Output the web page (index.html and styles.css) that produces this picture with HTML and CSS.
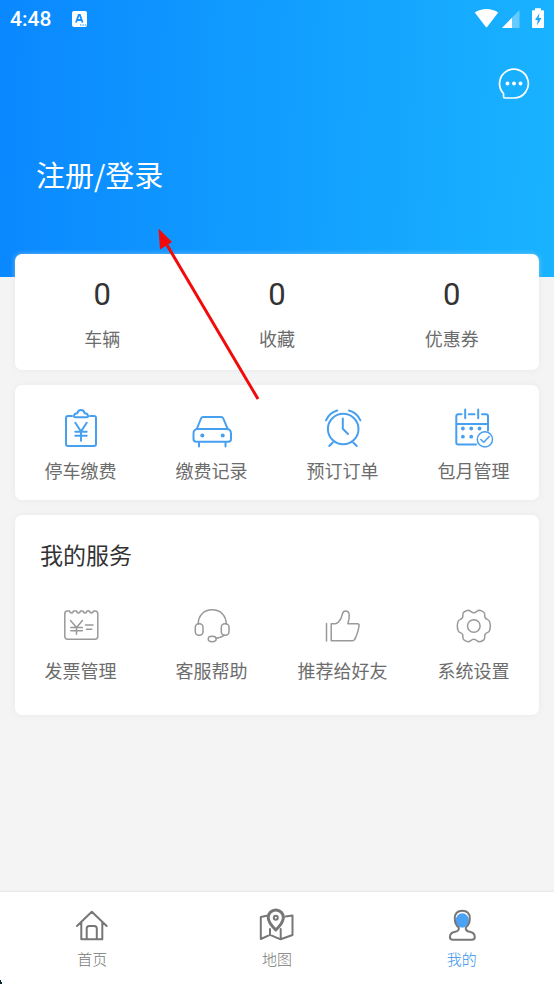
FILE: index.html
```html
<!DOCTYPE html>
<html lang="zh-CN">
<head>
<meta charset="utf-8">
<meta name="viewport" content="width=device-width, initial-scale=1">
<title>我的</title>
<link rel="stylesheet" href="styles.css">
</head>
<body>
<div class="page">
  <header class="hero">
    <div class="status">
      <span class="clock">4:48</span>
      <svg class="status-app" width="16" height="16" viewBox="0 0 16 16" aria-hidden="true">
        <rect width="15" height="16" rx="2" fill="#fff"/>
        <path d="M4 11.500 6.700 4h1.200l2.700 7.500M5 9h4.600" fill="none" stroke="#178fff" stroke-width="1.800"/>
        <path d="M8 14h1.400M10.500 14h1.400M13 14h1.200" stroke="#178fff" stroke-width="1.200"/>
      </svg>
      <svg class="status-signals" width="72" height="22" viewBox="0 0 72 22" aria-hidden="true">
        <path d="M.8 4.500C7-.2 18-.2 24.200 4.500L13.300 18.700q-.8 1-1.600 0z" fill="#fff"/>
        <path d="M45.500 2v18H28z" fill="#fff" opacity=".35"/>
        <path d="M38 9.700V20H28z" fill="#fff"/>
        <path d="M58 3.200q0-1 1-1h2V.2h6v2h2q1 0 1 1V19q0 1-1 1H59q-1 0-1-1z" fill="#fff"/>
        <path d="M65.500 5 61 12h2.700l-.7 5.500 4.500-7.500h-2.800z" fill="#18a9ff"/>
      </svg>
    </div>
    <button class="message" type="button" aria-label="消息">
      <svg width="32" height="32" viewBox="0 0 32 32" aria-hidden="true">
        <path d="M5.500 25.500A14.400 14.400 0 1 1 16 30H7Q5.500 30 5.500 28.600z" fill="none" stroke="#fff" stroke-width="1.700"/>
        <g fill="#fff"><circle cx="9.500" cy="15.500" r="1.900"/><circle cx="16" cy="15.500" r="1.900"/><circle cx="22.500" cy="15.500" r="1.900"/></g>
      </svg>
    </button>
    <a class="login" href="#login">注册/登录</a>
  </header>

  <main class="content">
    <section class="card stats">
      <a class="stat" href="#cars"><strong>0</strong><span>车辆</span></a>
      <a class="stat" href="#favorites"><strong>0</strong><span>收藏</span></a>
      <a class="stat" href="#coupons"><strong>0</strong><span>优惠券</span></a>
    </section>

    <section class="card shortcuts">
      <a class="item" href="#pay">
        <svg class="icon blue" viewBox="0 0 40 40" aria-hidden="true">
          <path d="M11 8H7Q5 8 5 10V36Q5 38 7 38H33Q35 38 35 36V10Q35 8 33 8H29"/>
          <path d="M14.500 9.300Q12.500 9.300 13 7.500 13.500 5.500 16.300 5.300 17 2 20 2T23.700 5.300Q26.500 5.500 27 7.500 27.500 9.300 25.500 9.300z"/>
          <path d="M14.300 14.700 20 23.500 25.700 14.700M20 23.500V32.700M14.300 23.700H25.700M14.300 27.700H25.700"/>
        </svg>
        <span>停车缴费</span>
      </a>
      <a class="item" href="#records">
        <svg class="icon blue" viewBox="0 0 40 40" aria-hidden="true">
          <path d="M5 20.500 9 10.500Q9.600 9 11.300 9H29Q30.700 9 31.300 10.500L35.500 20.500"/>
          <path d="M5.500 21H35Q39 21.500 39 25.500V31Q39 33.800 36.200 33.800H4.300Q1.500 33.800 1.500 31V25.500Q1.500 21.500 5.500 21zM7 34V38.500M33.500 34V38.500"/>
          <g class="solid"><circle cx="10.300" cy="27.400" r="2"/><circle cx="30.700" cy="27.400" r="2"/></g>
        </svg>
        <span>缴费记录</span>
      </a>
      <a class="item" href="#bookings">
        <svg class="icon blue" viewBox="0 0 40 40" aria-hidden="true">
          <circle cx="20.200" cy="21" r="15.300"/>
          <path d="M19.800 10.500V20.700L25 26M3 12.300Q6.500 4.500 14.300 2.500M26 2.500Q33.800 4.500 37.400 12.300M9.800 34.500 6.300 38M30.200 34.500 33.700 38"/>
        </svg>
        <span>预订订单</span>
      </a>
      <a class="item" href="#monthly">
        <svg class="icon blue" viewBox="0 0 40 40" aria-hidden="true">
          <path d="M7.500 6.300H4.300Q2.300 6.300 2.300 8.300V34.500Q2.300 36.500 4.300 36.500H22M14.800 6.300H20.500M28 6.300H32Q34 6.300 34 8.300V22.500M2.300 16H34M11.200 1.500V10.300M24.200 1.500V10.300"/>
          <g class="solid"><circle cx="8.900" cy="20.500" r="1.900"/><circle cx="17.200" cy="20.500" r="1.900"/><circle cx="25.500" cy="20.500" r="1.900"/><circle cx="8.900" cy="28.700" r="1.900"/><circle cx="17.200" cy="28.700" r="1.900"/></g>
          <g class="fine"><circle cx="30.900" cy="31.400" r="7.600"/><path d="M26.800 31.500 29.800 34.300 35.200 28.500"/></g>
        </svg>
        <span>包月管理</span>
      </a>
    </section>

    <section class="card services">
      <h2>我的服务</h2>
      <div class="service-list">
        <a class="item" href="#invoice">
          <svg class="icon gray" viewBox="0 0 40 40" aria-hidden="true">
            <path d="M6.500 6H8.500Q9 8 10.500 8T12.500 6H15.500Q16 8 17.500 8T19.500 6H22Q22.500 8 24 8T26 6H28.500Q29 8 30.500 8T32.500 6H34Q36.800 6 36.800 9V31.300Q36.800 34.300 33.800 34.300H6.800Q3.800 34.300 3.800 31.300V9Q3.800 6 6.500 6z"/>
            <path d="M9.500 15.500 15.500 22.500 21.500 15.500M15.500 22.500V29.300M9.800 22.500H21.300M9.800 25.800H21.300M24.500 20H32M25.500 24.300H30.700"/>
          </svg>
          <span>发票管理</span>
        </a>
        <a class="item" href="#help">
          <svg class="icon gray" viewBox="0 0 40 40" aria-hidden="true">
            <path d="M6.200 19C6.200 10.500 12 4.700 20.200 4.700S34.200 10.500 34.200 19"/>
            <rect x="3.300" y="18.800" width="7.700" height="11.400" rx="3.500"/>
            <rect x="29.300" y="18.800" width="7.700" height="11.400" rx="3.500"/>
            <ellipse cx="20.200" cy="34" rx="4" ry="2.700"/>
            <path d="M24 33.300Q29.500 32.500 32 30.200"/>
          </svg>
          <span>客服帮助</span>
        </a>
        <a class="item" href="#recommend">
          <svg class="icon gray" viewBox="0 0 40 40" aria-hidden="true">
            <path d="M3.500 18.500V36M8.200 18.700V35.700H29.500Q31 35.700 31.600 34.500 34.800 29 36.100 20.500 36.200 18.700 34.500 18.700H24.800Q26.600 13.500 26.200 9.500 25.800 6 22.500 6 19.900 6 19.300 9.300 18.700 13.200 15.500 17 14 18.700 12 18.700z"/>
          </svg>
          <span>推荐给好友</span>
        </a>
        <a class="item" href="#settings">
          <svg class="icon gray" viewBox="0 0 40 40" aria-hidden="true">
            <g transform="translate(19.800 21)">
              <circle r="6.300"/>
              <path d="M0-13.300C2.500-13.300 3.500-15.800 5.500-15.800Q8-15.500 10-13.800C11.800-12.300 10.300-10.300 11.300-8.300S14.500-7 15.500-5Q16.500-2.500 16.500 0T15.500 5C14.500 7 12.300 6.300 11.300 8.300S11.800 12.300 10 13.800Q8 15.500 5.500 15.800C3.500 15.800 2.500 13.300 0 13.300S-3.500 15.800-5.500 15.800Q-8 15.500-10 13.800C-11.800 12.300-10.300 10.300-11.300 8.300S-14.500 7-15.500 5Q-16.500 2.500-16.500 0T-15.500-5C-14.500-7-12.300-6.300-11.300-8.300S-11.800-12.300-10-13.800Q-8-15.500-5.500-15.800C-3.500-15.800-2.500-13.300 0-13.300z"/>
            </g>
          </svg>
          <span>系统设置</span>
        </a>
      </div>
    </section>
  </main>

  <nav class="tabs">
    <a class="tab" href="#home">
      <svg class="icon tab-icon" viewBox="0 0 40 40" aria-hidden="true">
        <path d="M5 21 19.800 6.800 34.700 21M9.300 17.500V34.300H30.300V17.500M14.700 34V23.500Q14.700 21 17.200 21H22.300Q24.800 21 24.800 23.500V34"/>
      </svg>
      <span>首页</span>
    </a>
    <a class="tab" href="#map">
      <svg class="icon tab-icon" viewBox="0 0 40 40" aria-hidden="true">
        <path d="M9.500 10.800 3.800 12V34L13 29.800 23.700 34.300 35.500 30V10.500L28.500 11.500M13 24V29.800M23.700 24V34"/>
        <path class="bold" d="M18.800 25Q11.200 17.500 11.200 12.500A7.600 7.600 0 0 1 26.400 12.500Q26.400 17.500 18.800 25z"/>
        <circle cx="18.800" cy="12.700" r="2"/>
      </svg>
      <span>地图</span>
    </a>
    <a class="tab active" href="#mine" aria-current="page">
      <svg class="icon tab-icon" viewBox="0 0 40 40" aria-hidden="true">
        <ellipse class="face" cx="20.300" cy="15.500" rx="6.700" ry="7.200"/>
        <path d="M16.800 22.500C14 20.500 12.800 17.500 12.800 13.500 12.800 8.500 15.500 5.800 20.300 5.800S27.800 8.500 27.800 13.500C27.800 17.500 26.500 20.500 23.800 22.500 23.500 25 24.500 26.200 27.500 26.700 31 27.300 32.800 29 32.800 32Q32.800 34.800 30 34.800H10.700Q7.900 34.800 7.900 32C7.900 29 9.700 27.300 13.200 26.700 16.200 26.200 17.200 25 16.800 22.500z"/>
      </svg>
      <span>我的</span>
    </a>
  </nav>

  <svg class="pointer" width="110" height="180" viewBox="0 0 110 180" aria-hidden="true">
    <path d="M108 174 17 20" stroke="#f20a0a" stroke-width="3"/>
    <path d="M8.500 3.500 10 24.500 22 17z" fill="#f20a0a"/>
  </svg>
  <svg class="corner" width="3" height="5" viewBox="0 0 3 5" aria-hidden="true">
    <path d="M0 1H1V3H2V5H0z" fill="#102532"/>
  </svg>
</div>
</body>
</html>
```
FILE: styles.css
```css
* {
  box-sizing: border-box;
}

body {
  margin: 0;
  background: #f4f4f4;
  color: #6c6c6c;
  font-family: "Noto Sans CJK SC", sans-serif;
}

a {
  color: inherit;
  text-decoration: none;
}

.page {
  position: relative;
  display: flex;
  flex-direction: column;
  min-height: 100vh;
}

.hero {
  display: flex;
  flex-direction: column;
  padding-bottom: 82px;
  background: linear-gradient(92deg, #0a88ff, #19b3ff);
  color: #fff;
}

.status {
  display: flex;
  align-items: center;
  height: 38px;
  padding: 0 8px 0 10px;
}

.clock {
  font: 500 21px/24px Roboto, sans-serif;
}

.status-app {
  margin-left: 21px;
}

.status-signals {
  margin-left: auto;
}

.message {
  align-self: flex-end;
  width: 32px;
  height: 32px;
  margin: 30px 24px 0 0;
  padding: 0;
  border: 0;
  background: none;
}

.message svg,
.icon {
  display: block;
}

.login {
  align-self: flex-start;
  margin: 53px 0 0 36px;
  font-size: 29px;
  line-height: 42px;
}

.content {
  display: flex;
  flex: 1;
  flex-direction: column;
  gap: 15px;
  margin-top: -23px;
  padding: 0 15px 24px;
}

.card {
  border-radius: 7px;
  background: #fff;
  box-shadow: 0 0 5px rgba(220, 225, 230, 0.5);
}

.stats {
  display: grid;
  grid-template-columns: repeat(3, 1fr);
  padding: 22px 0 20px;
}

.stat {
  display: flex;
  flex-direction: column;
  align-items: center;
  gap: 13px;
  font-size: 18px;
  line-height: 24px;
}

.stat strong {
  color: #333;
  font: 400 31px/37px Roboto, sans-serif;
}

.shortcuts,
.service-list {
  display: grid;
  grid-template-columns: repeat(4, 1fr);
}

.shortcuts {
  padding: 23px 0 18px;
}

.item {
  display: flex;
  flex-direction: column;
  align-items: center;
  gap: 10px;
  font-size: 18px;
  line-height: 24px;
  white-space: nowrap;
}

.services {
  padding: 24px 0 33px;
}

.services h2 {
  margin: 0 25px 36px;
  color: #333;
  font-size: 23px;
  font-weight: 400;
  line-height: 30px;
}

.services .item {
  gap: 13px;
}

.icon {
  width: 40px;
  height: 40px;
  fill: none;
  stroke-linecap: round;
  stroke-linejoin: round;
}

.blue {
  stroke: #479ff0;
  stroke-width: 2;
}

.blue .solid {
  fill: #479ff0;
  stroke: none;
}

.blue .fine {
  stroke-width: 1.5;
}

.gray {
  stroke: #999;
  stroke-width: 1.5;
}

.tabs {
  display: grid;
  grid-template-columns: repeat(3, 1fr);
  padding: 13px 0 15px;
  background: #fff;
  box-shadow: 0 -1px 2px rgba(0, 0, 0, 0.06);
}

.tab {
  display: flex;
  flex-direction: column;
  align-items: center;
  gap: 4px;
  color: #777;
  font-size: 15px;
  font-weight: 300;
  line-height: 20px;
}

.tab.active {
  color: #2f92ee;
}

.tab-icon {
  stroke: #777;
  stroke-width: 2;
}

.tab-icon .bold {
  stroke-width: 3;
}

.tab-icon .face {
  fill: #4ba2f5;
  stroke: none;
}

.pointer {
  position: absolute;
  top: 225px;
  left: 150px;
  pointer-events: none;
}

.corner {
  position: absolute;
  bottom: 0;
  left: 0;
}
```
